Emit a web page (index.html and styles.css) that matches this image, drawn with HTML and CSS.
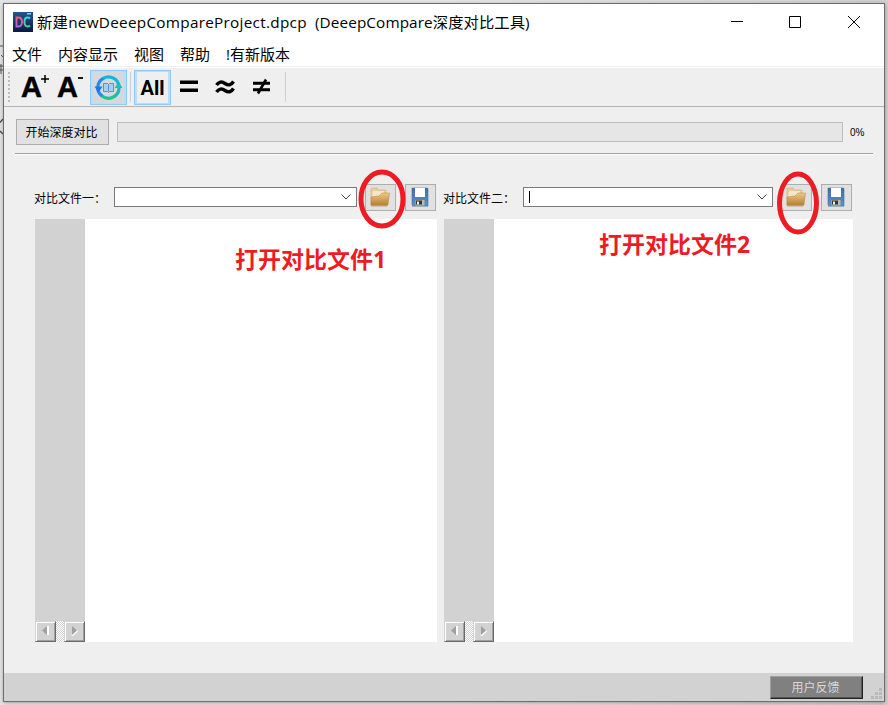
FILE: index.html
```html
<!DOCTYPE html>
<html lang="zh-CN">
<head>
    <meta charset="UTF-8">
    <title>DeeepCompare深度对比工具</title>
    <link rel="stylesheet" href="styles.css">
</head>
<body>

<svg class="svg-templates">
    <defs>
        <linearGradient id="folderFill" x2="0" y2="1"><stop stop-color="#ecca8b"/><stop offset="1" stop-color="#b87c2b"/></linearGradient>
        <linearGradient id="diskFill" x2="0" y2="1"><stop stop-color="#3d6ca9"/><stop offset="1" stop-color="#5c91cd"/></linearGradient>
        <linearGradient id="syncFill" x2="0" y2="1"><stop stop-color="#13b4df"/><stop offset="1" stop-color="#20c58b"/></linearGradient>
    </defs>
    <symbol id="folder" viewBox="0 0 20 20">
        <path d="M1 2q0-1 1-1h5l1 2h7q1 0 1 1v14H1z" fill="#e7cda0" stroke="#d1aa6c" stroke-width=".6"/>
        <path d="M3 4h11v7H2z" fill="#f5e5c9"/>
        <path d="M1 18.500V10l8-1 3-3h7.500L18 17.500q-.2 1-1 1z" fill="url(#folderFill)" stroke="#b88439" stroke-width=".5"/>
        <path d="M1 19.200h16" stroke="#bcb6ad"/>
    </symbol>
    <symbol id="disk" viewBox="0 0 18 20">
        <path d="M1 1h15q1 0 1 1v17H2l-1-1z" fill="url(#diskFill)" stroke="#436da0" stroke-width=".6"/>
        <path d="M4 1h10v9H4z" fill="#fff"/>
        <path d="M4.500 13h9v5.500h-9z" fill="#b9bab5"/>
        <path d="M5 13.500h6v4H5z" fill="#333"/>
        <path d="M6 14.500h2v3H6z" fill="#eee"/>
        <path d="M1 19.500h16" stroke="#a7adb5"/>
    </symbol>
</svg>

<!-- edge of the window behind -->
<svg class="behind" viewBox="0 0 3 140" fill="none" stroke="#444">
    <path d="M0 46h3M1 55l2 2M0 66h3M0 70h3M1 64v10" stroke-width=".9"/>
    <path d="M3 119L0 122.500M0 131l3 3" stroke-width="1.300"/>
</svg>

<div class="window">
    <div class="title-bar">
        <svg class="app-icon" viewBox="0 0 20 20">
            <defs>
                <linearGradient id="appFill" x2="0" y2="1"><stop stop-color="#24578c"/><stop offset="1" stop-color="#071a42"/></linearGradient>
                <linearGradient id="dFill" x2="0" y2="1"><stop stop-color="#f05a75"/><stop offset="1" stop-color="#b463d8"/></linearGradient>
                <linearGradient id="cFill" x2="0" y2="1"><stop stop-color="#36d7e0"/><stop offset="1" stop-color="#57c98a"/></linearGradient>
            </defs>
            <path d="M0 0h20v20H0z" fill="url(#appFill)"/>
            <path d="M3.500 5.500v9h2q3.500 0 3.500-4.500t-3.500-4.500z" fill="none" stroke="url(#dFill)" stroke-width="1.900"/>
            <path d="M17 6.500q-1-1-2.500-1-3 0-3 4.500t3 4.500q1.500 0 2.500-1" fill="none" stroke="url(#cFill)" stroke-width="1.900"/>
            <path d="M14 1h4v1.500h-4z" fill="#65d5ef"/>
        </svg>
        <span class="title-file">新建newDeeepCompareProject.dpcp</span>
        <span class="title-app">(DeeepCompare深度对比工具)</span>
        <svg class="window-controls" viewBox="0 0 130 14" fill="none" stroke="#000">
            <path d="M0 6.500h12M58.500 1.500h11v11h-11z"/>
            <path d="M117 1l12 12M129 1l-12 12"/>
        </svg>
    </div>

    <div class="menu-bar">
        <span>文件</span><span>内容显示</span><span>视图</span><span>帮助</span><span>!有新版本</span>
    </div>

    <div class="tool-bar">
        <div class="grip"></div>
        <div class="tool font-tool">A<svg viewBox="0 0 8 10"><path d="M4 1v8M0 5h8" stroke="#000" stroke-width="1.500"/></svg></div>
        <div class="tool font-tool">A<svg viewBox="0 0 8 10"><path d="M1 4h5" stroke="#000" stroke-width="1.800"/></svg></div>
        <div class="tool checked">
            <svg class="sync-icon" viewBox="0 0 31 31">
                <path d="M0 0h31v31H0z" fill="#d5d9db"/>
                <path d="M26 15A10.500 10.500 0 0 1 8 23" fill="none" stroke="url(#syncFill)" stroke-width="3.200"/>
                <path d="M9 24A10.500 10.500 0 0 1 11 6" fill="none" stroke="#2589f0" stroke-width="3.200"/>
                <path d="M10 6.500A10.500 10.500 0 0 1 26 15" fill="none" stroke="#13b4df" stroke-width="3.200"/>
                <path d="M1.500 14.500h8L5.500 20.500z" fill="#1b76ef"/>
                <path d="M21.500 16h8L25.500 10z" fill="#1bc2ac"/>
                <path d="M10.500 11.500h4l1 1 1-1h4v8h-4l-1 1-1-1h-4zM15.500 12.500v7" fill="#a5cef2" stroke="#4b96dc"/>
            </svg>
        </div>
        <div class="separator"></div>
        <div class="tool checked"><span class="all-tool">All</span></div>
        <svg class="compare-icons" viewBox="0 0 96 24" fill="none" stroke="#000" stroke-width="3.500">
            <path d="M1 7.300h18M1 15.300h18"/>
            <path d="M37.500 10q3.500-5 8.500-1.500t8.500-2M37.500 17q3.500-5 8.500-1.500t8.500-2" stroke-width="3.400"/>
            <path d="M74 8.300h17M74 14.700h17" stroke-width="3"/>
            <path d="M87 4.500l-8 14" stroke-width="2.600"/>
        </svg>
        <div class="separator last"></div>
    </div>

    <div class="content">
        <div class="progress-row">
            <button class="start-button">开始深度对比</button>
            <div class="progress"></div>
            <span class="percent">0%</span>
        </div>
        <div class="divider"></div>

        <div class="panes">
            <div class="pane">
                <div class="file-row">
                    <label>对比文件一：</label>
                    <div class="combo"><svg viewBox="0 0 10 6"><path d="M.5.500L5 5 9.500.500" fill="none" stroke="#444"/></svg></div>
                    <button class="icon-button open">
                        <svg class="folder-icon"><use href="#folder"/></svg>
                        <svg class="mark mark-one" viewBox="0 0 48 60"><ellipse cx="24" cy="30" rx="21" ry="27"/></svg>
                    </button>
                    <button class="icon-button"><svg class="disk-icon"><use href="#disk"/></svg></button>
                </div>
                <div class="editor">
                    <div class="gutter">
                        <div class="scroll-bar">
                            <span class="scroll-button"><svg viewBox="0 0 9 11"><path d="M7 1v9" stroke="#fff" stroke-width="2"/><path d="M6 1v9L1 5.500z" fill="#a0a0a0"/></svg></span>
                            <span class="scroll-button"><svg viewBox="0 0 9 11"><path d="M2 10.500l5.500-5" stroke="#fff" stroke-width="2"/><path d="M2 1v9l5-4.500z" fill="#a0a0a0"/></svg></span>
                        </div>
                    </div>
                    <div class="text-area"><span class="note note-one">打开对比文件1</span></div>
                </div>
            </div>

            <div class="pane">
                <div class="file-row">
                    <label>对比文件二：</label>
                    <div class="combo"><span class="caret"></span><svg viewBox="0 0 10 6"><path d="M.5.500L5 5 9.500.500" fill="none" stroke="#444"/></svg></div>
                    <button class="icon-button open">
                        <svg class="folder-icon"><use href="#folder"/></svg>
                        <svg class="mark mark-two" viewBox="0 0 44 64"><ellipse cx="22" cy="32" rx="18.500" ry="29"/></svg>
                    </button>
                    <button class="icon-button"><svg class="disk-icon"><use href="#disk"/></svg></button>
                </div>
                <div class="editor">
                    <div class="gutter">
                        <div class="scroll-bar">
                            <span class="scroll-button"><svg viewBox="0 0 9 11"><path d="M7 1v9" stroke="#fff" stroke-width="2"/><path d="M6 1v9L1 5.500z" fill="#a0a0a0"/></svg></span>
                            <span class="scroll-button"><svg viewBox="0 0 9 11"><path d="M2 10.500l5.500-5" stroke="#fff" stroke-width="2"/><path d="M2 1v9l5-4.500z" fill="#a0a0a0"/></svg></span>
                        </div>
                    </div>
                    <div class="text-area"><span class="note note-two">打开对比文件2</span></div>
                </div>
            </div>
        </div>
    </div>

    <div class="status-bar">
        <button class="feedback">用户反馈</button>
        <svg class="size-grip" viewBox="0 0 11 11" fill="#b9b9b9"><path d="M8 0h3v3H8zM4 4h3v3H4zM8 4h3v3H8zM0 8h3v3H0zM4 8h3v3H4zM8 8h3v3H8z"/></svg>
    </div>
</div>

</body>
</html>
```
FILE: styles.css
```css
* {
    box-sizing: border-box;
}

body {
    margin: 0;
    padding: 3px;
    height: 705px;
    overflow: hidden;
    background: linear-gradient(to right, #e6e6e6 50%, #d0d0d0);
    font-family: "Open Sans", "Noto Sans CJK SC", sans-serif;
    color: #000;
}

svg {
    display: block;
    flex: none;
}

button {
    padding: 0;
    font-family: inherit;
    font-size: 12px;
}

.svg-templates {
    position: absolute;
    width: 0;
    height: 0;
}

.behind {
    position: absolute;
    left: 0;
    top: 0;
    width: 3px;
    height: 140px;
}

.window {
    display: flex;
    flex-direction: column;
    width: 882px;
    height: 699px;
    border: 1px solid #6d6d6d;
    background: #efefef;
    box-shadow: 0 1px 4px rgba(0, 0, 0, 0.3);
}

/* title and menu */
.title-bar {
    display: flex;
    align-items: center;
    height: 37px;
    padding: 0 23px 0 9px;
    background: #fff;
    font-size: 15.3px;
    white-space: nowrap;
}

.app-icon {
    width: 20px;
    height: 20px;
    margin: -2px 4px 0 0;
}

.title-file {
    width: 278px;
    margin-top: -4px;
    letter-spacing: 0.28px;
}

.title-app {
    margin-top: -4px;
    letter-spacing: 0.1px;
}

.window-controls {
    width: 130px;
    height: 14px;
    margin: -1px 0 0 auto;
}

.menu-bar {
    display: flex;
    gap: 16px;
    height: 26px;
    padding-left: 8px;
    border-bottom: 1px solid #efefef;
    background: #fff;
    font-size: 15px;
    line-height: 26px;
}

/* toolbar */
.tool-bar {
    display: flex;
    align-items: center;
    height: 40px;
    border-top: 1px solid #fff;
    border-bottom: 1px solid #b2b2b2;
}

.grip {
    width: 2px;
    height: 31px;
    margin: 0 8px 0 4px;
    background: repeating-linear-gradient(#bcbcbc 0 2px, transparent 2px 4px);
}

.tool {
    display: flex;
    align-items: center;
    justify-content: center;
    width: 37px;
    height: 35px;
}

.font-tool {
    width: 36px;
    padding-left: 3px;
    justify-content: flex-start;
    font: bold 29px "Liberation Sans", sans-serif;
    -webkit-text-stroke: 0.5px #000;
}

.font-tool svg {
    width: 8px;
    height: 10px;
    margin: -17px 0 0 -1px;
}

.checked {
    border: 1px solid #90c8f6;
    background: #c0dcf3;
}

.sync-icon {
    width: 31px;
    height: 31px;
}

.all-tool {
    width: 31px;
    height: 31px;
    background: #efefef;
    font: bold 20px/32px Roboto, sans-serif;
    text-align: center;
}

.separator {
    width: 1px;
    height: 30px;
    margin: 0 3px;
    background: #d0d0d0;
}

.separator.last {
    margin: 0;
}

.compare-icons {
    width: 96px;
    height: 24px;
    margin: 0 10px 0 8px;
}

/* main area */
.content {
    display: flex;
    flex: 1;
    flex-direction: column;
}

.progress-row {
    display: flex;
    align-items: center;
    height: 46px;
    margin: 0 10px 0 11px;
    padding: 4px 0 0 1px;
}

.divider {
    height: 2px;
    margin: 0 11px;
    border-top: 1px solid #a0a0a0;
    border-bottom: 1px solid #fff;
}

.start-button {
    width: 93px;
    height: 26px;
    padding-right: 2px;
    border: 1px solid #adadad;
    background: #e1e1e1;
}

.progress {
    width: 726px;
    height: 20px;
    margin: 0 7px 0 8px;
    border: 1px solid #bcbcbc;
    background: #e6e6e6;
}

.percent {
    font: 10px "Liberation Sans", sans-serif;
}

.panes {
    display: grid;
    grid-template-columns: 402px 409px;
    gap: 7px;
    padding: 29px 0 0 31px;
}

.file-row {
    display: flex;
    align-items: center;
    height: 27px;
    margin-bottom: 8px;
    padding-right: 1px;
}

.file-row label {
    width: 80px;
    flex: none;
    margin-left: -1px;
    font-size: 12px;
    white-space: nowrap;
}

.combo {
    display: flex;
    flex: 1;
    align-items: center;
    height: 20px;
    margin: 0 8px 1px 0;
    padding: 0 5px;
    border: 1px solid #7a7a7a;
    background: #fff;
}

.combo svg {
    width: 10px;
    height: 6px;
    margin-left: auto;
}

.caret {
    width: 1px;
    height: 12px;
    background: #000;
}

.icon-button {
    position: relative;
    display: flex;
    align-items: center;
    justify-content: center;
    width: 31px;
    height: 27px;
    padding-right: 2px;
    border: 1px solid #adadad;
    background: #e1e1e1;
}

.icon-button.open {
    margin-right: 9px;
}

.folder-icon {
    width: 20px;
    height: 20px;
    margin-bottom: 1px;
}

.disk-icon {
    width: 18px;
    height: 20px;
    margin-bottom: 1px;
}

/* hand-drawn rings over the open buttons */
.mark {
    position: absolute;
    z-index: 1;
    fill: none;
    stroke: #ed1c24;
    stroke-width: 5;
}

.mark-one {
    left: -8px;
    top: -16px;
    width: 48px;
    height: 60px;
}

.mark-two {
    left: -6px;
    top: -14px;
    width: 44px;
    height: 64px;
}

.editor {
    display: flex;
    height: 423px;
    background: #fff;
}

.gutter {
    display: flex;
    align-items: flex-end;
    width: 50px;
    background: #d2d2d2;
}

.scroll-bar {
    display: flex;
    justify-content: space-between;
    width: 50px;
    height: 21px;
    background: repeating-conic-gradient(#fff 0 25%, #d2d2d2 0 50%) 0 0 / 2px 2px;
}

.scroll-button {
    display: flex;
    align-items: center;
    justify-content: center;
    width: 21px;
    height: 21px;
    border: 1px solid;
    border-color: #d2d2d2 #696969 #696969 #d2d2d2;
    background: #d2d2d2;
    box-shadow: inset 1px 1px #fff, inset -1px -1px #a0a0a0;
}

.scroll-button svg {
    width: 9px;
    height: 11px;
    margin: 0 1px 2px 0;
}

.text-area {
    flex: 1;
}

.note {
    display: block;
    color: #ed1c24;
    font-size: 23px;
    font-weight: bold;
    line-height: 30px;
}

.note-one {
    margin: 25px 0 0 150px;
}

.note-two {
    margin: 10px 0 0 105px;
}

.status-bar {
    display: flex;
    align-items: center;
    justify-content: flex-end;
    height: 28px;
    padding-right: 2px;
    background: #d2d2d2;
}

.feedback {
    width: 93px;
    height: 23px;
    padding-right: 2px;
    border: 1px solid;
    border-color: #a0a0a0 #222 #222 #a0a0a0;
    background: #808080;
    box-shadow: inset -1px -1px #555;
    color: #d8d8d8;
}

.size-grip {
    width: 11px;
    height: 11px;
    margin: 12px 0 0 8px;
}
```
